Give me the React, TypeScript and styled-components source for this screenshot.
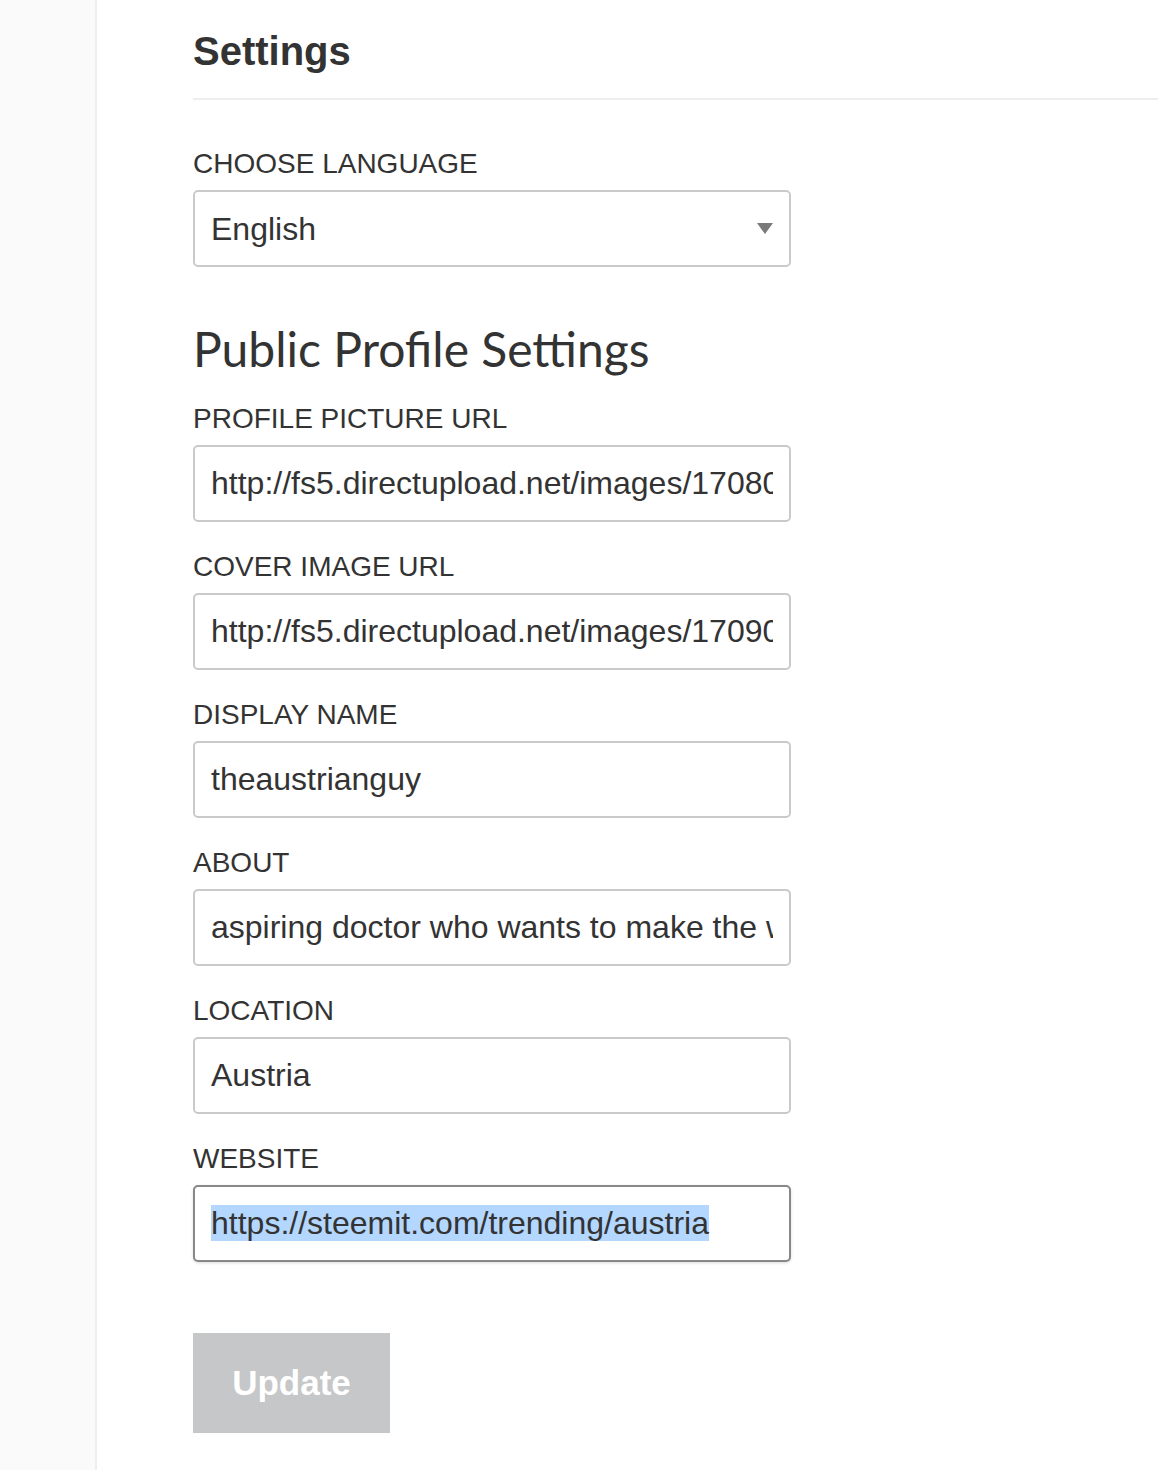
import { FC } from "react";
import styled, { createGlobalStyle } from "styled-components";

const GlobalStyle = createGlobalStyle`
  html, body {
    margin: 0;
    padding: 0;
    background: #fff;
  }
  body {
    font-family: "Liberation Sans", Arial, Helvetica, sans-serif;
    color: #333;
  }
  * { box-sizing: border-box; }
`;

// layout
const Page = styled.div`
  display: flex;
  min-height: 1470px;
`;

const Sidebar = styled.aside`
  width: 97px;
  flex: none;
  background: #fafafa;
  border-right: 2px solid #eee;
`;

const Main = styled.main`
  flex: 1;
  padding: 28px 0 0 96px;
`;

const Title = styled.h1`
  margin: 0 0 23px;
  font-size: 40px;
  line-height: 47px;
  font-weight: 700;
  color: #333;
`;

const Rule = styled.hr`
  margin: 0 0 44px;
  border: 0;
  height: 2px;
  background: #eee;
`;

const Form = styled.form`
  width: 598px;
  display: flex;
  flex-direction: column;
`;

const Field = styled.div`
  display: flex;
  flex-direction: column;
  margin-bottom: 25px;
`;

const Label = styled.label`
  font-size: 28px;
  line-height: 40px;
  margin-bottom: 6px;
  text-transform: uppercase;
  color: #333;
`;

const SectionHeading = styled.h2`
  margin: 28px 0 21px;
  font-family: Lato, "Open Sans", sans-serif;
  font-size: 48px;
  line-height: 1.2;
  font-weight: 400;
  color: #333;
`;

const boxStyles = `
  width: 100%;
  height: 77px;
  padding: 0 16px;
  border: 2px solid #cacaca;
  border-radius: 5px;
  background: #fff;
  font-family: "Liberation Sans", Arial, sans-serif;
  font-size: 32px;
  color: #333;
  outline: none;
`;

const TextInput = styled.input`
  ${boxStyles}
`;

const SelectWrap = styled.div`
  position: relative;
`;

const Select = styled.select`
  ${boxStyles}
  appearance: none;
  -webkit-appearance: none;
`;

const Caret = styled.svg`
  position: absolute;
  right: 18px;
  top: 33px;
  width: 16px;
  height: 11px;
  pointer-events: none;
`;

const FocusedBox = styled.div<{ $focused?: boolean }>`
  ${boxStyles}
  display: flex;
  align-items: center;
  white-space: nowrap;
  overflow: hidden;
  border-color: ${(p) => (p.$focused ? "#888" : "#cacaca")};
  box-shadow: ${(p) => (p.$focused ? "0 1px 3px rgba(0,0,0,0.15)" : "none")};
`;

const Selected = styled.span`
  background: #b3d7fe;
  line-height: 36px;
`;

const UpdateButton = styled.button`
  align-self: flex-start;
  margin-top: 46px;
  width: 197px;
  height: 100px;
  border: 0;
  background: #c6c7c8;
  color: #fff;
  font-family: "Liberation Sans", Arial, sans-serif;
  font-size: 35px;
  font-weight: 700;
  cursor: not-allowed;
`;

const fields = [
  {
    label: "Profile picture url",
    value: "http://fs5.directupload.net/images/170802/temp/z7k4m2qa.jpg",
  },
  {
    label: "Cover image url",
    value: "http://fs5.directupload.net/images/170902/temp/p3x9c8yb.jpg",
  },
  { label: "Display name", value: "theaustrianguy" },
  {
    label: "About",
    value: "aspiring doctor who wants to make the world a better place",
  },
  { label: "Location", value: "Austria" },
];

const App: FC = () => {
  return (
    <>
      <GlobalStyle />
      <Page>
        <Sidebar />
        <Main>
          <Title>Settings</Title>
          <Rule />

          <Form onSubmit={(e) => e.preventDefault()}>
            <Field>
              <Label>Choose language</Label>
              <SelectWrap>
                <Select defaultValue="en">
                  <option value="en">English</option>
                  <option value="de">Deutsch</option>
                </Select>
                <Caret viewBox="0 0 16 11">
                  <path d="M0 0h16L8 11z" fill="#7a7a7a" />
                </Caret>
              </SelectWrap>
            </Field>

            <SectionHeading>Public Profile Settings</SectionHeading>

            {fields.map((f) => (
              <Field key={f.label}>
                <Label>{f.label}</Label>
                <TextInput type="text" defaultValue={f.value} />
              </Field>
            ))}

            <Field>
              <Label>Website</Label>
              <FocusedBox $focused>
                <Selected>https://steemit.com/trending/austria</Selected>
              </FocusedBox>
            </Field>

            <UpdateButton type="submit" disabled>
              Update
            </UpdateButton>
          </Form>
        </Main>
      </Page>
    </>
  );
};

export default App;
